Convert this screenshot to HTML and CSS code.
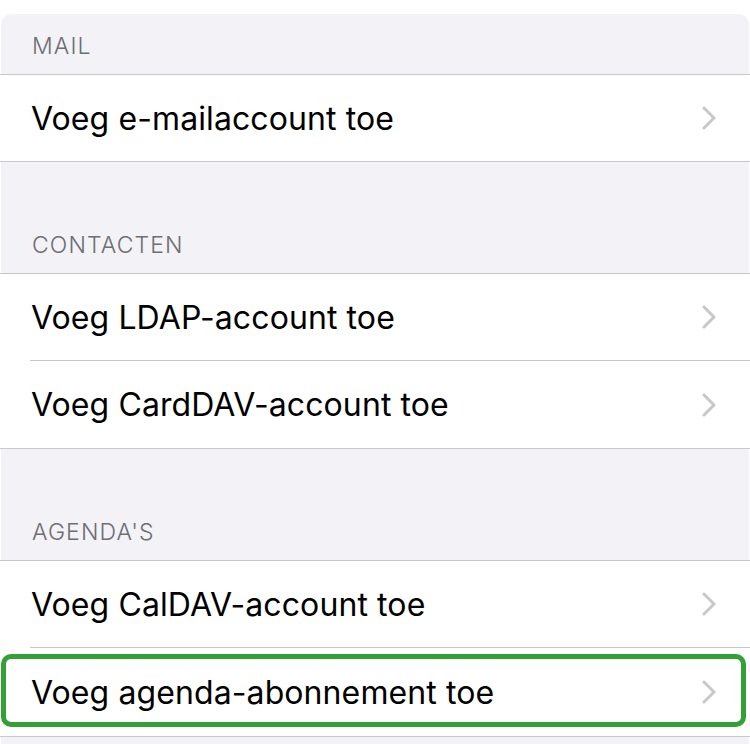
FILE: index.html
```html
<!DOCTYPE html>
<html>
<head>
<meta charset="utf-8">
<link rel="stylesheet" href="styles.css">
</head>
<body>
<div class="panel">
  <div class="header first">MAIL</div>
  <div class="group">
    <div class="row"><span class="label">Voeg e-mailaccount toe</span><svg class="chev" viewBox="0 0 14 24"><path d="M2 2 L12 12 L2 22"/></svg></div>
  </div>
  <div class="header">CONTACTEN</div>
  <div class="group">
    <div class="row"><span class="label">Voeg LDAP-account toe</span><svg class="chev" viewBox="0 0 14 24"><path d="M2 2 L12 12 L2 22"/></svg></div>
    <div class="row"><span class="label">Voeg CardDAV-account toe</span><svg class="chev" viewBox="0 0 14 24"><path d="M2 2 L12 12 L2 22"/></svg></div>
  </div>
  <div class="header">AGENDA'S</div>
  <div class="group">
    <div class="row"><span class="label">Voeg CalDAV-account toe</span><svg class="chev" viewBox="0 0 14 24"><path d="M2 2 L12 12 L2 22"/></svg></div>
    <div class="row highlighted"><span class="label">Voeg agenda-abonnement toe</span><svg class="chev" viewBox="0 0 14 24"><path d="M2 2 L12 12 L2 22"/></svg><div class="highlight"></div></div>
  </div>
  <div class="footer"></div>
</div>
</body>
</html>
```

FILE: styles.css
```css
html, body {
  margin: 0;
  padding: 0;
  background: #ffffff;
}
body {
  width: 750px;
  height: 744px;
  overflow: hidden;
  font-family: Inter, Roboto, "Liberation Sans", sans-serif;
}
.panel {
  margin: 14px 1px 0 1px;
  background: #f2f2f7;
  border-radius: 11px 11px 0 0;
  min-height: 730px;
}
.header {
  height: 111px;
  box-sizing: border-box;
  display: flex;
  align-items: flex-end;
  padding: 0 0 14px 31px;
  font-size: 23px;
  line-height: 28px;
  font-weight: 300;
  color: #6d6d72;
  letter-spacing: 1.1px;
}
.header.first {
  height: 60px;
}
.group {
  background: #ffffff;
  border-top: 1px solid #c8c7cc;
  border-bottom: 1px solid #c8c7cc;
  margin: 0 -1px;
}
.row {
  position: relative;
  height: 86px;
  display: flex;
  align-items: center;
  padding: 0 34px 0 31px;
}
.row + .row {
  height: 87px;
  border-top: 1px solid #c8c7cc;
  margin-left: 30px;
  padding-left: 1px;
}
.row.highlighted {
  height: 88px;
}
.label {
  flex: 1;
  font-size: 32px;
  color: #000000;
  letter-spacing: 0.1px;
}
.chev {
  width: 14px;
  height: 24px;
  fill: none;
  stroke: #c7c7cc;
  stroke-width: 3;
  stroke-linecap: round;
  stroke-linejoin: round;
}
.highlight {
  position: absolute;
  top: 6px;
  bottom: 9px;
  left: -29px;
  right: 4px;
  border: 5px solid #33a035;
  border-radius: 10px;
}
.footer {
  height: 20px;
}
```
